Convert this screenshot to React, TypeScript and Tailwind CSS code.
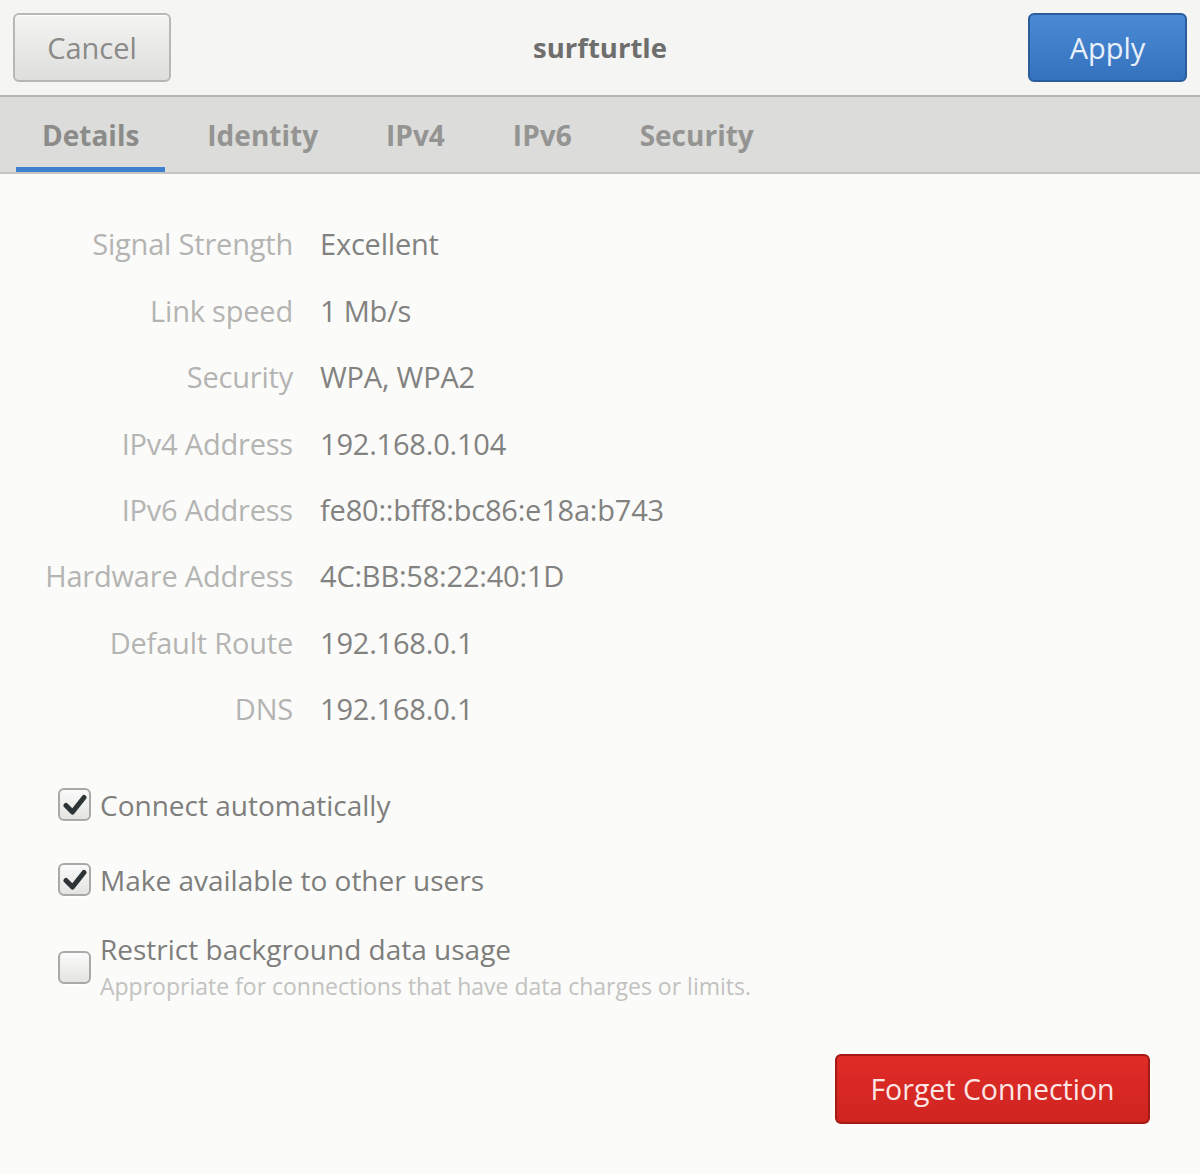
import React from 'react'

const details: [string, string][] = [
  ['Signal Strength', 'Excellent'],
  ['Link speed', '1 Mb/s'],
  ['Security', 'WPA, WPA2'],
  ['IPv4 Address', '192.168.0.104'],
  ['IPv6 Address', 'fe80::bff8:bc86:e18a:b743'],
  ['Hardware Address', '4C:BB:58:22:40:1D'],
  ['Default Route', '192.168.0.1'],
  ['DNS', '192.168.0.1'],
]

const tabs = ['Details', 'Identity', 'IPv4', 'IPv6', 'Security']

function CheckBox({ checked }: { checked: boolean }) {
  return (
    <div className="flex h-[33px] w-[33px] shrink-0 items-center justify-center rounded-[6px] border-2 border-[#a9a9a6] bg-gradient-to-b from-[#fafafa] to-[#e4e4e2] shadow-[0_1px_0_#fff]">
      {checked && (
        <svg width="24" height="22" viewBox="0 0 24 22">
          <path d="M3 11.5 L9.5 18 L21 3.5" fill="none" stroke="#2e3436" strokeWidth="5" strokeLinecap="round" strokeLinejoin="round" />
        </svg>
      )}
    </div>
  )
}

export default function App() {
  return (
    <div className="flex h-[1175px] w-[1200px] flex-col bg-[#fbfbfa] font-['Open_Sans',sans-serif]">
      {/* header bar */}
      <div className="grid h-[97px] shrink-0 grid-cols-[1fr_auto_1fr] items-center border-b-2 border-[#b4b4b1] bg-[#f5f5f4] px-[13px]">
        <div>
          <button className="h-[69px] w-[158px] rounded-[6px] border-2 border-[#b7b7b4] bg-gradient-to-b from-[#f4f4f3] to-[#dededc] text-[29px] text-[#8a8a88] shadow-[inset_0_1px_0_#fff]">
            Cancel
          </button>
        </div>
        <div className="text-[27.5px] font-bold text-[#6e6e6c]">surfturtle</div>
        <div className="flex justify-end">
          <button className="h-[69px] w-[159px] rounded-[6px] border-2 border-[#2a5d9e] bg-gradient-to-b from-[#4a8ad4] to-[#3572be] text-[29px] text-[#e8f0fa]">
            Apply
          </button>
        </div>
      </div>

      {/* tabs */}
      <div className="flex h-[77px] shrink-0 gap-[16px] border-b-2 border-[#c4c4c1] bg-[#dcdcda] px-[16px]">
        {tabs.map((t, i) => (
          <div
            key={t}
            className={
              i === 0
                ? 'flex items-center border-b-[5px] border-[#3d80d0] px-[26px] pt-[5px] text-[28px] font-bold text-[#8b8b89]'
                : 'flex items-center border-b-[5px] border-transparent px-[26px] pt-[5px] text-[28px] font-bold text-[#949492]'
            }
          >
            {t}
          </div>
        ))}
      </div>

      {/* details */}
      <div className="grid grid-cols-[293px_1fr] gap-x-[27px] pt-[37px]">
        {details.map(([k, v]) => (
          <React.Fragment key={k}>
            <div className="flex h-[66.4px] items-center justify-end text-[29px] tracking-[-0.2px] text-[#b4b4b2]">{k}</div>
            <div className="flex h-[66.4px] items-center text-[29px] tracking-[-0.2px] text-[#828280]">{v}</div>
          </React.Fragment>
        ))}
      </div>

      {/* options */}
      <div className="mt-[25px] flex flex-col pl-[58px]">
        <label className="flex h-[75px] items-center gap-[9px]">
          <CheckBox checked />
          <span className="text-[28px] text-[#7e7e7c]">Connect automatically</span>
        </label>
        <label className="flex h-[75px] items-center gap-[9px]">
          <CheckBox checked />
          <span className="text-[28px] text-[#7e7e7c]">Make available to other users</span>
        </label>
        <label className="mt-[13px] flex items-center gap-[9px]">
          <CheckBox checked={false} />
          <div className="flex flex-col">
            <span className="text-[28px] leading-[38px] text-[#7e7e7c]">Restrict background data usage</span>
            <span className="text-[23px] leading-[36px] text-[#c2c2c0]">Appropriate for connections that have data charges or limits.</span>
          </div>
        </label>
      </div>

      <div className="mt-[50px] flex justify-end pr-[50px]">
        <button className="h-[70px] w-[315px] rounded-[6px] border-2 border-[#a41a15] bg-gradient-to-b from-[#e02c27] to-[#cf2420] text-[28.5px] text-[#fbe6e5]">
          Forget Connection
        </button>
      </div>
    </div>
  )
}
